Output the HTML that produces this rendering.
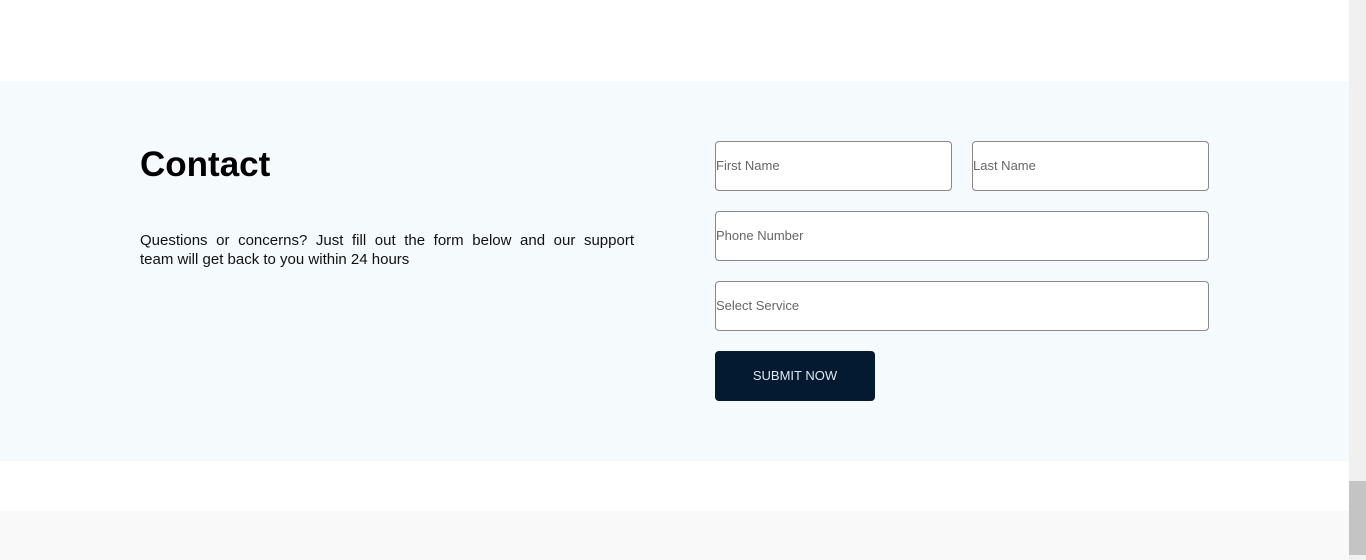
<!DOCTYPE html>
<html><head><meta charset="utf-8"><style>
html,body{margin:0;padding:0;width:1366px;height:560px;overflow:hidden;background:#fff;font-family:"Liberation Sans",sans-serif;}
.sec{position:absolute;left:0;top:81px;width:1349px;height:380px;background:#f5fafd;}
.bot{position:absolute;left:0;top:511px;width:1349px;height:49px;background:#f9f9f9;}
.sb{position:absolute;left:1349px;top:0;width:17px;height:560px;background:#f0f0f0;}
.th{position:absolute;left:1349px;top:481px;width:17px;height:74px;background:#c4c4c4;}
h1{position:absolute;left:140px;top:145px;margin:0;font-size:35px;font-weight:bold;color:#000;line-height:40px;}
p{position:absolute;left:140px;top:231px;width:494px;margin:0;font-size:15px;line-height:19px;color:#111;}
p span{display:block;text-align:justify;text-align-last:justify;}
.f{position:absolute;box-sizing:border-box;height:50px;border:1px solid #888;border-radius:4px;background:#fff;font-size:13px;color:#666;line-height:48px;padding-left:0;}
.btn{position:absolute;left:715px;top:351px;width:160px;height:50px;background:#031a30;border-radius:4px;color:#dfe8f0;font-size:13px;text-align:center;line-height:50px;}
</style></head><body>
<div class="sec"></div><div class="bot"></div><div class="sb"></div><div class="th"></div>
<h1>Contact</h1>
<p><span>Questions or concerns? Just fill out the form below and our support</span>team will get back to you within 24 hours</p>
<div class="f" style="left:715px;top:141px;width:237px">First Name</div>
<div class="f" style="left:972px;top:141px;width:237px">Last Name</div>
<div class="f" style="left:715px;top:211px;width:494px">Phone Number</div>
<div class="f" style="left:715px;top:281px;width:494px">Select Service</div>
<div class="btn">SUBMIT NOW</div>
</body></html>
